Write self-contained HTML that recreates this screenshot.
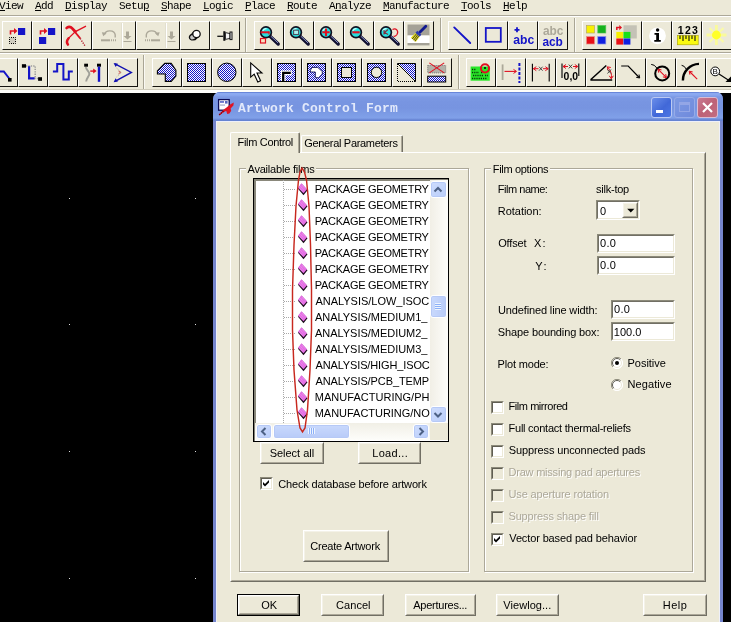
<!DOCTYPE html>
<html><head><meta charset="utf-8"><title>Artwork Control Form</title>
<style>
html,body{margin:0;padding:0;background:#000;}
body{width:731px;height:622px;overflow:hidden;position:relative;font-family:"Liberation Sans",sans-serif;font-size:11px;color:#000;}
div,span{position:absolute;box-sizing:border-box;}
.t{white-space:nowrap;line-height:13px;height:13px;}
.face{background:#ECE9D8;}
.menu span{font-family:"Liberation Mono",monospace;font-size:11px;letter-spacing:-0.6px;top:0px;line-height:13px;white-space:nowrap;}
.menu u{text-decoration:underline;text-underline-offset:1px;text-decoration-thickness:1px;}
.tb{width:30px;height:29px;border-left:1px solid #fff;border-top:1px solid #fff;border-right:1px solid #15140f;border-bottom:1px solid #15140f;background:#ECE9D8;}
.tb svg{position:absolute;left:0;top:0;}
.vsep{width:2px;border-left:1px solid #A9A594;border-right:1px solid #FAF9F3;}
.btn{background:#ECE9D8;border:1px solid;border-color:#fff #716F64 #716F64 #fff;text-align:center;}
.btn>i{position:absolute;left:0;top:0;right:0;bottom:0;border:1px solid;border-color:#F4F2E8 #ACA899 #ACA899 #F4F2E8;}
.etch{border:1px solid #ACA899;box-shadow:1px 1px 0 #fff, inset 1px 1px 0 #fff;}
.edit{background:#fff;border:1px solid;border-color:#8C8A7A #fff #fff #8C8A7A;}
.edit>i{position:absolute;left:0;top:0;right:0;bottom:0;border:1px solid;border-color:#716F64 #ECE9D8 #ECE9D8 #716F64;}
.cb{width:13px;height:13px;background:#fff;border:1px solid;border-color:#8C8A7A #fff #fff #8C8A7A;}
.cb>i{position:absolute;left:0;top:0;right:0;bottom:0;border:1px solid;border-color:#5f5d52 #ECE9D8 #ECE9D8 #5f5d52;}
.cb.dis{background:#ECE9D8;}
.row{left:60px;height:16px;line-height:16px;white-space:nowrap;letter-spacing:-0.32px;}
.dis{color:#ACA899;text-shadow:1px 1px 0 #fff;}
</style></head><body>
<svg width="0" height="0" style="position:absolute"><defs><pattern id="dz" width="2" height="2" patternUnits="userSpaceOnUse"><rect width="2" height="2" fill="#fff"/><rect width="1" height="1" fill="#1414C8"/><rect x="1" y="1" width="1" height="1" fill="#1414C8"/></pattern></defs></svg>

<div id="all" style="left:0;top:0;width:731px;height:622px;will-change:transform">
<div style="left:69px;top:198px;width:1px;height:1px;background:#ddd"></div>
<div style="left:69px;top:324px;width:1px;height:1px;background:#ddd"></div>
<div style="left:69px;top:451px;width:1px;height:1px;background:#ddd"></div>
<div style="left:69px;top:578px;width:1px;height:1px;background:#ddd"></div>
<div style="left:195px;top:198px;width:1px;height:1px;background:#ddd"></div>
<div style="left:195px;top:324px;width:1px;height:1px;background:#ddd"></div>
<div style="left:195px;top:451px;width:1px;height:1px;background:#ddd"></div>
<div style="left:195px;top:578px;width:1px;height:1px;background:#ddd"></div>
<div class="face" style="left:0;top:0;width:731px;height:93px"></div>
<div style="left:0;top:15px;width:731px;height:1px;background:#ACA899"></div>
<div style="left:0;top:16px;width:731px;height:1px;background:#fff"></div>
<div style="left:0;top:52px;width:731px;height:1px;background:#ACA899"></div>
<div style="left:0;top:53px;width:731px;height:1px;background:#fff"></div>
<div style="left:0;top:89px;width:731px;height:1px;background:#CFCBB9"></div>
<div style="left:0;top:90px;width:731px;height:3px;background:#FDFDFA"></div>
<div class="menu" style="left:0;top:0;width:731px;height:15px">
<span style="left:-1px"><u>V</u>iew</span>
<span style="left:35px"><u>A</u>dd</span>
<span style="left:65px"><u>D</u>isplay</span>
<span style="left:119px">Setu<u>p</u></span>
<span style="left:161px"><u>S</u>hape</span>
<span style="left:203px"><u>L</u>ogic</span>
<span style="left:245px"><u>P</u>lace</span>
<span style="left:287px"><u>R</u>oute</span>
<span style="left:329px">A<u>n</u>alyze</span>
<span style="left:383px"><u>M</u>anufacture</span>
<span style="left:461px"><u>T</u>ools</span>
<span style="left:503px"><u>H</u>elp</span>
</div>
<div class="tb" style="left:2px;top:21px"><svg width="28" height="27" viewBox="0 0 28 27"><path d="M7.5 12.5 V9 H12" fill="none" stroke="#E01020" stroke-width="1.6"/><path d="M11 6 L14.5 9 L11 12 Z" fill="#E01020"/><rect x="15" y="6" width="7.2" height="7" fill="#1414C8"/><rect x="6.5" y="15.5" width="6" height="6" fill="#CFCCBE" stroke="#000" stroke-width="1" stroke-dasharray="1 1" stroke-dashoffset="0.5"/></svg></div>
<div class="tb" style="left:32px;top:21px"><svg width="28" height="27" viewBox="0 0 28 27"><path d="M7.5 12.5 V9 H12" fill="none" stroke="#E01020" stroke-width="1.6"/><path d="M11 6 L14.5 9 L11 12 Z" fill="#E01020"/><rect x="15" y="6" width="7.2" height="7" fill="#1414C8"/><rect x="6" y="15" width="7.2" height="7" fill="#1414C8"/></svg></div>
<div class="tb" style="left:62px;top:21px"><svg width="28" height="27" viewBox="0 0 28 27"><path d="M3.6 6 C5 4.2 7.6 4.6 9 6.2 L12.4 9.8" fill="none" stroke="#E01020" stroke-width="2.7" stroke-linecap="round"/><path d="M9 6.2 L17.2 16.4" fill="none" stroke="#E01020" stroke-width="1.7"/><path d="M17.2 16.4 L21.8 23.6" stroke="#B01020" stroke-width="1.4" stroke-dasharray="1.2 1.3"/><path d="M23 4.2 L12.4 9.6 L5.2 16.6" fill="none" stroke="#E01020" stroke-width="1.3"/><path d="M5.6 16.2 C3.8 18.4 3.6 20.8 4.9 22.6" fill="none" stroke="#E01020" stroke-width="2.5" stroke-linecap="round"/></svg></div>
<div class="tb" style="left:92px;top:21px;width:44px"><div style="left:28px;top:1px;width:1px;height:25px;background:#E2DFD0"></div><div style="left:29px;top:1px;width:1px;height:25px;background:#fff"></div><svg width="42" height="27" viewBox="0 0 42 27"><path d="M11.5 12.5 A5.4 4.4 0 0 1 22.2 12.8 V15.5" fill="none" stroke="#ACA899" stroke-width="1.4"/><path d="M8.8 10.3 L13.8 10.8 L10.3 14.3 Z" fill="#ACA899"/><path d="M8 18.3 H17" stroke="#ACA899" stroke-width="2"/><path d="M18 18.3 H23" stroke="#ACA899" stroke-width="2" stroke-dasharray="1 1"/><path d="M33 9.5 H36 V14 H38.5 L34.5 17.5 L30.5 14 H33 Z" fill="#ACA899"/><path d="M30.5 19.5 H38.5" stroke="#ACA899" stroke-width="1"/></svg></div>
<div class="tb" style="left:136px;top:21px;width:44px"><div style="left:28px;top:1px;width:1px;height:25px;background:#E2DFD0"></div><div style="left:29px;top:1px;width:1px;height:25px;background:#fff"></div><svg width="42" height="27" viewBox="0 0 42 27"><path d="M20 12.5 A5.4 4.4 0 0 0 9.3 12.8 V15.5" fill="none" stroke="#ACA899" stroke-width="1.4"/><path d="M22.7 10.3 L17.7 10.8 L21.2 14.3 Z" fill="#ACA899"/><path d="M14 18.3 H23" stroke="#ACA899" stroke-width="2"/><path d="M8 18.3 H13" stroke="#ACA899" stroke-width="2" stroke-dasharray="1 1"/><path d="M33 9.5 H36 V14 H38.5 L34.5 17.5 L30.5 14 H33 Z" fill="#ACA899"/><path d="M30.5 19.5 H38.5" stroke="#ACA899" stroke-width="1"/></svg></div>
<div class="tb" style="left:180px;top:21px"><svg width="28" height="27" viewBox="0 0 28 27"><path d="M8 15 L12.5 9 L19 14 L14 18.5 Z" fill="#111"/><ellipse cx="12" cy="15" rx="3.6" ry="2.8" transform="rotate(-25 12 15)" fill="#C8C8C8" stroke="#111" stroke-width="1.3"/><circle cx="15.5" cy="12" r="3.7" fill="#fff" stroke="#111" stroke-width="1.3"/></svg></div>
<div class="tb" style="left:210px;top:21px"><svg width="28" height="27" viewBox="0 0 28 27"><path d="M6.3 14.3 H12.3" stroke="#111" stroke-width="1.3"/><rect x="12.3" y="9.2" width="2.1" height="9.6" fill="#111"/><path d="M14.4 10.6 L19 11.6 V16.4 L14.4 17.4 Z" fill="#F4F4F4" stroke="#111" stroke-width="0.9"/><rect x="19" y="10" width="2" height="7.6" fill="#E8E8E8" stroke="#111" stroke-width="1"/></svg></div>
<div class="vsep" style="left:245px;top:18px;height:34px"></div>
<div class="tb" style="left:254px;top:21px"><svg width="28" height="27" viewBox="0 0 28 27"><path d="M15 14.3 L23.2 22.0" stroke="#101030" stroke-width="3.4" stroke-linecap="round"/><path d="M15.5 13.9 L23 20.9" stroke="#8890C8" stroke-width="1"/><circle cx="11" cy="10.3" r="5.4" fill="#28E0E0" stroke="#101020" stroke-width="1.7"/><path d="M7.8 8.8 A3.6 3.6 0 0 1 11.5 6.700000000000001" stroke="#D8FFFF" stroke-width="1.3" fill="none"/><path d="M5.5 10.3 H14.5" stroke="#E01020" stroke-width="2"/><path d="M14 9.5 V12.5" stroke="#E01020" stroke-width="1.2"/><rect x="5.5" y="16.5" width="5" height="4.5" fill="#F8E0C0" stroke="#E01020" stroke-width="1.2"/></svg></div>
<div class="tb" style="left:284px;top:21px"><svg width="28" height="27" viewBox="0 0 28 27"><path d="M15 14.3 L23.2 22.0" stroke="#101030" stroke-width="3.4" stroke-linecap="round"/><path d="M15.5 13.9 L23 20.9" stroke="#8890C8" stroke-width="1"/><circle cx="11" cy="10.3" r="5.4" fill="#28E0E0" stroke="#101020" stroke-width="1.7"/><path d="M7.8 8.8 A3.6 3.6 0 0 1 11.5 6.700000000000001" stroke="#D8FFFF" stroke-width="1.3" fill="none"/><rect x="8.6" y="8.2" width="5" height="4.3" fill="#A8F0F0" stroke="#505060" stroke-width="1.1"/></svg></div>
<div class="tb" style="left:314px;top:21px"><svg width="28" height="27" viewBox="0 0 28 27"><path d="M15 14.3 L23.2 22.0" stroke="#101030" stroke-width="3.4" stroke-linecap="round"/><path d="M15.5 13.9 L23 20.9" stroke="#8890C8" stroke-width="1"/><circle cx="11" cy="10.3" r="5.4" fill="#28E0E0" stroke="#101020" stroke-width="1.7"/><path d="M7.8 8.8 A3.6 3.6 0 0 1 11.5 6.700000000000001" stroke="#D8FFFF" stroke-width="1.3" fill="none"/><path d="M7.3 10.3 H14.7 M11 6.6 V14" stroke="#E01020" stroke-width="2.1"/></svg></div>
<div class="tb" style="left:344px;top:21px"><svg width="28" height="27" viewBox="0 0 28 27"><path d="M15 14.3 L23.2 22.0" stroke="#101030" stroke-width="3.4" stroke-linecap="round"/><path d="M15.5 13.9 L23 20.9" stroke="#8890C8" stroke-width="1"/><circle cx="11" cy="10.3" r="5.4" fill="#28E0E0" stroke="#101020" stroke-width="1.7"/><path d="M7.8 8.8 A3.6 3.6 0 0 1 11.5 6.700000000000001" stroke="#D8FFFF" stroke-width="1.3" fill="none"/><path d="M7.3 10.3 H14.7" stroke="#E01020" stroke-width="2.1"/></svg></div>
<div class="tb" style="left:374px;top:21px"><svg width="28" height="27" viewBox="0 0 28 27"><path d="M15 14.3 L23.2 22.0" stroke="#101030" stroke-width="3.4" stroke-linecap="round"/><path d="M15.5 13.9 L23 20.9" stroke="#8890C8" stroke-width="1"/><circle cx="11" cy="10.3" r="5.4" fill="#28E0E0" stroke="#101020" stroke-width="1.7"/><path d="M7.8 8.8 A3.6 3.6 0 0 1 11.5 6.700000000000001" stroke="#D8FFFF" stroke-width="1.3" fill="none"/><path d="M9 8 V12.5 M13 7.5 L9.5 10.5 L13 12.5" stroke="#803040" stroke-width="1.1" fill="none"/><path d="M17.5 7.5 C21 5.5 24 9 22 12.5 C21 14 19.5 14.5 18.5 14" fill="none" stroke="#E01020" stroke-width="1.2"/></svg></div>
<div class="tb" style="left:404px;top:21px"><svg width="28" height="27" viewBox="0 0 28 27"><rect x="2.5" y="2.5" width="22" height="11" fill="#A5A297"/><rect x="2.5" y="13.5" width="22" height="7.5" fill="#fff"/><rect x="2.5" y="21" width="22" height="2.4" fill="#A5A297"/><path d="M20.8 4.3 L14.8 10.3" stroke="#101890" stroke-width="2.8" stroke-linecap="round"/><path d="M12.3 8.8 L16.3 12.8 L14.6 14.8 L10.3 11 Z" fill="#2838B0"/><path d="M10.3 11 L14.6 14.8 L10.8 20 L5.8 15.8 Z" fill="#E8E020"/><path d="M11.4 12 L7.2 17 M12.6 13 L8.6 18.2 M13.7 14 L9.9 19.2" stroke="#222" stroke-width="0.8"/></svg></div>
<div class="vsep" style="left:440px;top:18px;height:34px"></div>
<div class="tb" style="left:448px;top:21px"><svg width="28" height="27" viewBox="0 0 28 27"><path d="M5.2 5.4 L21.2 21" stroke="#1414C8" stroke-width="1.9" stroke-linecap="round"/></svg></div>
<div class="tb" style="left:478px;top:21px"><svg width="28" height="27" viewBox="0 0 28 27"><rect x="6.8" y="6" width="15" height="13.8" fill="none" stroke="#1414C8" stroke-width="1.8"/></svg></div>
<div class="tb" style="left:508px;top:21px"><svg width="28" height="27" viewBox="0 0 28 27"><path d="M5.5 7.8 H10.5 M8 5.3 V10.3" stroke="#1414C8" stroke-width="1.8"/><text x="4.2" y="21.5" font-family="Liberation Sans,sans-serif" font-weight="bold" font-size="12.5" fill="#1414C8" textLength="21" lengthAdjust="spacingAndGlyphs">abc</text></svg></div>
<div class="tb" style="left:538px;top:21px"><svg width="28" height="27" viewBox="0 0 28 27"><text x="3.9" y="13" font-family="Liberation Sans,sans-serif" font-weight="bold" font-size="12.5" fill="#ACA899" textLength="20.5" lengthAdjust="spacingAndGlyphs">abc</text><text x="3.4" y="24" font-family="Liberation Sans,sans-serif" font-weight="bold" font-size="12.5" fill="#1414C8" textLength="20.5" lengthAdjust="spacingAndGlyphs">acb</text></svg></div>
<div class="vsep" style="left:574px;top:18px;height:34px"></div>
<div class="tb" style="left:582px;top:21px"><svg width="28" height="27" viewBox="0 0 28 27"><rect x="3.5" y="3.5" width="8" height="7.5" fill="#F8F000" stroke="#B8A860" stroke-width="0.7"/><rect x="14.8" y="3.5" width="8" height="7.5" fill="#10A818" stroke="#58C858" stroke-width="0.7"/><path d="M15.5 5 H22 M15.5 7 H22 M15.5 9 H22" stroke="#30D838" stroke-width="0.9" stroke-dasharray="1 1"/><rect x="3.5" y="14.6" width="8" height="7.4" fill="#E81018" stroke="#E89088" stroke-width="0.7"/><rect x="14.8" y="14.6" width="8" height="7.4" fill="#1020E0" stroke="#8890E8" stroke-width="0.7"/></svg></div>
<div class="tb" style="left:612px;top:21px"><svg width="28" height="27" viewBox="0 0 28 27"><rect x="10.5" y="3.3" width="13.3" height="13.2" fill="#C4C2B6"/><path d="M3.8 8 V5.6 H7" fill="none" stroke="#E01020" stroke-width="1.5"/><path d="M6.3 3 L9 5.6 L6.3 8.2 Z" fill="#E01020"/><rect x="3.3" y="9.9" width="6.9" height="6.4" fill="#F8F000"/><rect x="10.5" y="9.9" width="6.9" height="6.4" fill="#18E018"/><rect x="3.3" y="16.5" width="6.9" height="6.1" fill="#E81018"/><rect x="10.5" y="16.5" width="6.9" height="6.1" fill="#1020E0"/></svg></div>
<div class="tb" style="left:642px;top:21px"><svg width="28" height="27" viewBox="0 0 28 27"><circle cx="14.5" cy="13.8" r="8.4" fill="#fff"/><circle cx="14.6" cy="8" r="1.7" fill="#000"/><path d="M11.5 11 H16 V18 H17.8 V19.8 H11.3 V18 H13.2 V12.8 H11.5 Z" fill="#000"/></svg></div>
<div class="tb" style="left:672px;top:21px"><svg width="28" height="27" viewBox="0 0 28 27"><text x="4.8" y="11.6" font-family="Liberation Sans,sans-serif" font-weight="bold" font-size="10.5" fill="#000" textLength="20" lengthAdjust="spacing">123</text><rect x="4.4" y="13.6" width="20.8" height="9.2" fill="#FAFA10" stroke="#a8a000" stroke-width="0.6"/><path d="M7 13.6 V17 M10 13.6 V19 M13 13.6 V17 M16 13.6 V19 M19 13.6 V17 M22 13.6 V19" stroke="#111" stroke-width="1.1"/></svg></div>
<div class="tb" style="left:702px;top:21px"><svg width="28" height="27" viewBox="0 0 28 27"><path d="M13.4 3 V23 M3.5 13 H23.5" stroke="#FAFA9C" stroke-width="2.8"/><path d="M6.5 6 L20.5 20 M20.5 6 L6.5 20" stroke="#FAFAA8" stroke-width="2.2"/><circle cx="13.4" cy="13" r="4.4" fill="#FFFF28"/></svg></div>
<div class="tb" style="left:-12px;top:58px"><svg width="28" height="27" viewBox="0 0 28 27"><path d="M10 12.4 H14.8 L20.6 20" fill="none" stroke="#1414C8" stroke-width="2"/><rect x="19" y="19" width="3.6" height="3.6" fill="#000"/></svg></div>
<div class="tb" style="left:18px;top:58px"><svg width="28" height="27" viewBox="0 0 28 27"><path d="M7 7 H16.2 V19.4 M15.4 19.4 H19" fill="none" stroke="#9C9C9C" stroke-width="1.5" stroke-dasharray="1.3 1.1"/><path d="M10.1 7.2 V19.4 H15.6" fill="none" stroke="#1414C8" stroke-width="2.2"/><rect x="2.9" y="5.2" width="4.1" height="3.5" fill="#000"/><rect x="19.1" y="18.2" width="3.9" height="3.6" fill="#000"/></svg></div>
<div class="tb" style="left:48px;top:58px"><svg width="28" height="27" viewBox="0 0 28 27"><path d="M3.9 12.4 H8.2 V4.9 H14.4 V20.6 H19.8 V12.4 H23.8" fill="none" stroke="#1414C8" stroke-width="2"/></svg></div>
<div class="tb" style="left:78px;top:58px"><svg width="28" height="27" viewBox="0 0 28 27"><path d="M7 8 C6.5 10.5 10.6 12.5 10.4 15 C10.1 17.5 7.4 19 7.2 22.5" fill="none" stroke="#A0A098" stroke-width="2"/><rect x="5.2" y="4.7" width="3.8" height="3" fill="#000"/><rect x="18" y="4.7" width="4" height="3" fill="#000"/><path d="M18.8 7.6 H21.2 V22.8 H18.8 Z" fill="#1414C8"/><path d="M11.3 12.1 H15" stroke="#E01020" stroke-width="1.4"/><path d="M14.2 9.6 L17.6 12.1 L14.2 14.6 Z" fill="#E01020"/></svg></div>
<div class="tb" style="left:108px;top:58px"><svg width="28" height="27" viewBox="0 0 28 27"><path d="M6 4.8 L22.4 13.4 L6 22.4" fill="none" stroke="#1010B0" stroke-width="1.4"/><path d="M4.6 4 L9 4.8 L6.6 8 Z M4.6 23.2 L9 22.4 L6.6 19.2 Z" fill="#1010B0"/><path d="M7.5 9 L12.5 13.4 L7.5 18" fill="none" stroke="#B8B8A8" stroke-width="1" stroke-dasharray="1.5 1"/><path d="M9.5 12 L11.5 13.4 L9.5 14.8" fill="none" stroke="#C04040" stroke-width="0.9"/></svg></div>
<div class="vsep" style="left:143px;top:55px;height:34px"></div>
<div class="tb" style="left:152px;top:58px"><svg width="28" height="27" viewBox="0 0 28 27"><path d="M4.4 11.8 L11.8 4.4 H18.2 L22.9 11.1 V17.1 L18.2 22.4 H12.3 V15 H4.4 Z" fill="url(#dz)" stroke="#000" stroke-width="1.1"/></svg></div>
<div class="tb" style="left:182px;top:58px"><svg width="28" height="27" viewBox="0 0 28 27"><rect x="4.5" y="4.5" width="18" height="18" fill="url(#dz)" stroke="#000" stroke-width="1"/></svg></div>
<div class="tb" style="left:212px;top:58px"><svg width="28" height="27" viewBox="0 0 28 27"><circle cx="13.8" cy="13.3" r="9.2" fill="url(#dz)" stroke="#000" stroke-width="1"/></svg></div>
<div class="tb" style="left:242px;top:58px"><svg width="28" height="27" viewBox="0 0 28 27"><path d="M7.7 3.9 V18.1 L11.2 15.2 L14.8 23 L17.6 21.7 L14 14 H19 Z" fill="#fff" stroke="#000" stroke-width="1.1" stroke-linejoin="miter"/></svg></div>
<div class="tb" style="left:272px;top:58px"><svg width="28" height="27" viewBox="0 0 28 27"><rect x="4.5" y="4.5" width="18" height="18" fill="url(#dz)" stroke="#000" stroke-width="1"/><path d="M10.2 22.5 V13.8 H18.8" fill="none" stroke="#fff" stroke-width="4.8"/><path d="M10.2 22.5 V13.8 H17.8" fill="none" stroke="#000" stroke-width="2.3"/><rect x="7.5" y="22" width="6" height="1" fill="#000"/></svg></div>
<div class="tb" style="left:302px;top:58px"><svg width="28" height="27" viewBox="0 0 28 27"><rect x="4.5" y="4.5" width="18" height="18" fill="url(#dz)" stroke="#000" stroke-width="1"/><path d="M7.4 11.3 L9 8.4 H14.8 L19.3 12.5 V15 L15.6 18.7 H12.3 V13 H7.4 Z" fill="#fff" stroke="#101050" stroke-width="0.9"/></svg></div>
<div class="tb" style="left:332px;top:58px"><svg width="28" height="27" viewBox="0 0 28 27"><rect x="4.5" y="4.5" width="18" height="18" fill="url(#dz)" stroke="#000" stroke-width="1"/><rect x="8.5" y="8.5" width="10" height="10" fill="#ECE9D8" stroke="#000" stroke-width="1"/></svg></div>
<div class="tb" style="left:362px;top:58px"><svg width="28" height="27" viewBox="0 0 28 27"><rect x="4.5" y="4.5" width="18" height="18" fill="url(#dz)" stroke="#000" stroke-width="1"/><circle cx="13.5" cy="13.4" r="5.2" fill="#ECE9D8" stroke="#000" stroke-width="1"/></svg></div>
<div class="tb" style="left:392px;top:58px"><svg width="28" height="27" viewBox="0 0 28 27"><path d="M4.5 4.5 H22.5 V22.5 Z" fill="url(#dz)" stroke="#000" stroke-width="1"/><path d="M4.5 5 V22.5 H22" fill="none" stroke="#000" stroke-width="1" stroke-dasharray="1 1"/></svg></div>
<div class="tb" style="left:422px;top:58px"><svg width="28" height="27" viewBox="0 0 28 27"><rect x="4.7" y="6.5" width="18" height="7.4" fill="#B4B2A8" stroke="#777" stroke-width="1" stroke-dasharray="1 1"/><path d="M6.3 3.9 L21.2 13.9 M21.2 3.9 L6.3 13.9" stroke="#E01020" stroke-width="1.1"/><rect x="4.7" y="17.2" width="18" height="5.8" fill="url(#dz)" stroke="#000" stroke-width="1"/></svg></div>
<div class="vsep" style="left:458px;top:55px;height:34px"></div>
<div class="tb" style="left:466px;top:58px"><svg width="28" height="27" viewBox="0 0 28 27"><rect x="3.6" y="7.5" width="19.2" height="14.2" fill="#28E828"/><path d="M5 10.5 H9 M5 13.5 H12 M6 16.5 H16 M5 19.5 H20 M14 13.5 H16 M18 16.5 H21" stroke="#0a300a" stroke-width="1.6" stroke-dasharray="1.2 1"/><circle cx="18" cy="9.3" r="4.1" fill="none" stroke="#E01020" stroke-width="2"/><rect x="17" y="8" width="2" height="2" fill="#103010"/></svg></div>
<div class="tb" style="left:496px;top:58px"><svg width="28" height="27" viewBox="0 0 28 27"><path d="M5.6 5.4 V21" stroke="#ACA899" stroke-width="1.8"/><path d="M7.5 12.4 H19" stroke="#E01020" stroke-width="1.1"/><path d="M19.5 12.4 l-3 2 M19.5 12.4 l-3 -2" stroke="#E01020" stroke-width="1" fill="none"/><path d="M22.4 4 V24" stroke="#1414C8" stroke-width="2" stroke-dasharray="3 1.5"/></svg></div>
<div class="tb" style="left:526px;top:58px"><svg width="28" height="27" viewBox="0 0 28 27"><path d="M5.4 4.8 V22.4 M22.2 4.8 V22.4" stroke="#000" stroke-width="1.1"/><path d="M6.5 9.7 H11.5 M16 9.7 H21" stroke="#E01020" stroke-width="1"/><path d="M6.3 9.7 l3 -2 M6.3 9.7 l3 2" stroke="#E01020" stroke-width="1" fill="none"/><path d="M21.3 9.7 l-3 2 M21.3 9.7 l-3 -2" stroke="#E01020" stroke-width="1" fill="none"/><path d="M12 7.7 L15.6 11.7 M15.6 7.7 L12 11.7" stroke="#333" stroke-width="0.9"/></svg></div>
<div class="tb" style="left:556px;top:58px"><svg width="28" height="27" viewBox="0 0 28 27"><path d="M5 4.4 V19 M21.8 4.4 V17" stroke="#000" stroke-width="1.1"/><path d="M6.2 7.5 H11 M16 7.5 H20.6" stroke="#E01020" stroke-width="1"/><path d="M6 7.5 l3 -2 M6 7.5 l3 2" stroke="#E01020" stroke-width="1" fill="none"/><path d="M20.8 7.5 l-3 2 M20.8 7.5 l-3 -2" stroke="#E01020" stroke-width="1" fill="none"/><path d="M11.8 5.6 L15.2 9.4 M15.2 5.6 L11.8 9.4" stroke="#333" stroke-width="0.9"/><text x="6.6" y="20.9" font-family="Liberation Sans,sans-serif" font-weight="bold" font-size="10" fill="#000" textLength="14.5" lengthAdjust="spacingAndGlyphs">0,0</text></svg></div>
<div class="tb" style="left:586px;top:58px"><svg width="28" height="27" viewBox="0 0 28 27"><path d="M3.4 20.9 H25.2 M3.6 20.7 L19.3 6.5" stroke="#000" stroke-width="1.5" fill="none"/><path d="M20.5 8 Q25.5 13 24.3 19.5" fill="none" stroke="#E01020" stroke-width="1"/><path d="M20.3 7.8 l3.4999999999999996 0.6999999999999997 M20.3 7.8 l0.6999999999999997 3.4999999999999996" stroke="#E01020" stroke-width="1" fill="none"/><path d="M24.3 19.8 l-2 -3 M24.3 19.8 l2 -3" stroke="#E01020" stroke-width="1" fill="none"/><path d="M20.5 10.5 L24 14.5 M24 10.5 L20.5 14.5" stroke="#333" stroke-width="0.9"/></svg></div>
<div class="tb" style="left:616px;top:58px"><svg width="28" height="27" viewBox="0 0 28 27"><path d="M4.2 7 H11.2 L22.2 18.5" fill="none" stroke="#000" stroke-width="1.2"/><path d="M22.7 19 l-3.4999999999999996 -0.6999999999999997 M22.7 19 l-0.6999999999999997 -3.4999999999999996" stroke="#000" stroke-width="1" fill="none"/></svg></div>
<div class="tb" style="left:646px;top:58px"><svg width="28" height="27" viewBox="0 0 28 27"><circle cx="15.2" cy="14.4" r="7" fill="none" stroke="#000" stroke-width="2"/><path d="M4.2 5.4 Q7.5 5.4 9.8 9" fill="none" stroke="#000" stroke-width="1"/><path d="M11.2 10.4 L19.2 18.4" stroke="#E01020" stroke-width="1.1"/><path d="M11 10.2 l3.4999999999999996 0.6999999999999997 M11 10.2 l0.6999999999999997 3.4999999999999996" stroke="#E01020" stroke-width="1" fill="none"/><path d="M19.4 18.6 l-3.4999999999999996 -0.6999999999999997 M19.4 18.6 l-0.6999999999999997 -3.4999999999999996" stroke="#E01020" stroke-width="1" fill="none"/></svg></div>
<div class="tb" style="left:676px;top:58px"><svg width="28" height="27" viewBox="0 0 28 27"><path d="M5.9 21.5 A16.5 16.5 0 0 1 22 4.9" fill="none" stroke="#000" stroke-width="2.4"/><path d="M4.6 6.3 Q7.5 6.5 9.3 10.3" fill="none" stroke="#000" stroke-width="1"/><path d="M20.2 20.2 L12.5 12.5" stroke="#E01020" stroke-width="1.1"/><path d="M12.2 12.2 l3.4999999999999996 0.6999999999999997 M12.2 12.2 l0.6999999999999997 3.4999999999999996" stroke="#E01020" stroke-width="1" fill="none"/></svg></div>
<div class="tb" style="left:706px;top:58px"><svg width="28" height="27" viewBox="0 0 28 27"><circle cx="8.2" cy="12.4" r="4.4" fill="#fff" stroke="#000" stroke-width="1"/><text x="5.6" y="15.4" font-family="Liberation Sans,sans-serif" font-size="8" fill="#000">B</text><path d="M12 15 L22 21.5" stroke="#000" stroke-width="1.1"/><path d="M24.4 17 V22.9 H18.5 Z" fill="#000"/></svg></div>
<div id="dlg" style="left:213px;top:92px;width:510px;height:540px;background:#7585CD;border-radius:7px 7px 0 0;overflow:hidden;will-change:transform">
<div style="left:0;top:0;width:510px;height:29px;background:linear-gradient(to bottom,#6482D7 0px,#6C8ADC 1px,#8CAAF1 1.5px,#8AA8F0 3px,#7C99E4 5px,#7895E1 10px,#7794E0 16px,#7E9EE7 24px,#80A0E8 26px,#6C8AD8 27.5px,#6280D0 29px)"></div>
<svg style="position:absolute;left:4px;top:6px" width="18" height="18" viewBox="0 0 18 18">
<rect x="1.6" y="1.6" width="10.6" height="10.6" fill="#fff" stroke="#0c0c58" stroke-width="1.3"/>
<rect x="3" y="3.2" width="4" height="1.5" fill="#4858c0"/><rect x="8" y="3" width="2.6" height="2.6" fill="#5868c0"/><rect x="3" y="6.6" width="5" height="0.9" fill="#8890b8"/>
<path d="M1.6 16.6 L6.5 11.8 L9.5 9.6 L13.5 6.3 L16.8 4.4 L16.4 7.6 L13.6 10.6 L14.2 12.8 L12.4 15.6 L10.2 16 L9.2 12.8 L5.2 15.2 L2.6 17.4 Z" fill="#E01424"/>
<path d="M2.4 16.8 L6.4 13.2" stroke="#400008" stroke-width="1.1" stroke-dasharray="1 1.2"/>
</svg>
<span style="left:25px;top:9px;font-family:'Liberation Mono',monospace;font-weight:bold;font-size:13px;letter-spacing:0.2px;line-height:15px;color:#E2E9FB;white-space:nowrap">Artwork Control Form</span>
<div style="left:438px;top:5px;width:21px;height:21px;border:1px solid #BBCAF3;border-radius:3px;background:linear-gradient(135deg,#6A8EEA 0%,#4168D8 55%,#4C76E4 100%)"><div style="left:4px;top:12px;width:7px;height:3px;background:#fff"></div></div>
<div style="left:461px;top:5px;width:21px;height:21px;border:1px solid #96ABE8;border-radius:3px;background:linear-gradient(135deg,#7D99E3 0%,#6F8ADC 100%)"><div style="left:4px;top:4px;width:11px;height:10px;border:1px solid #93A6E6;border-top-width:3px"></div></div>
<div style="left:484px;top:5px;width:21px;height:21px;border:1px solid #D9BCD3;border-radius:3px;background:linear-gradient(135deg,#C97A92 0%,#BE6277 50%,#C26C80 100%)"><svg style="position:absolute;left:0;top:0" width="19" height="19"><path d="M5 5 L14 14 M14 5 L5 14" stroke="#fff" stroke-width="2.2" stroke-linecap="butt"/></svg></div>
<div class="face" style="left:3px;top:29px;width:504px;height:520px;border:1px solid #EEF0FA;border-bottom:none"></div>
<div style="left:17px;top:60px;width:476px;height:430px;border:1px solid;border-color:#fff #716F64 #716F64 #fff;"><i style="position:absolute;left:0;top:0;right:0;bottom:0;border:1px solid;border-color:#ECE9D8 #ACA899 #ACA899 #ECE9D8"></i></div>
<div class="face" style="left:88px;top:43px;width:102px;height:17px;border:1px solid;border-color:#fff #716F64 transparent #fff;border-bottom:none;border-radius:2px 2px 0 0"><i style="position:absolute;left:0;top:0;right:0;bottom:0;border-right:1px solid #ACA899"></i></div>
<div class="face" style="left:17px;top:40px;width:70px;height:21px;border:1px solid;border-color:#fff #716F64 transparent #fff;border-bottom:none;border-radius:2px 2px 0 0"><i style="position:absolute;left:0;top:0;right:0;bottom:0;border-right:1px solid #ACA899"></i></div>
<span class="t" style="left:24.54px;top:44px;letter-spacing:-0.320px;">Film Control</span>
<span class="t" style="left:91.18px;top:45px;letter-spacing:-0.311px;">General Parameters</span>
<div class="etch" style="left:26px;top:76px;width:230px;height:404px"></div>
<div class="etch" style="left:271px;top:76px;width:209px;height:404px"></div>
<div class="face" style="left:33px;top:71px;width:70px;height:13px"></div>
<div class="face" style="left:278px;top:71px;width:59px;height:13px"></div>
<span class="t" style="left:34.44px;top:71px;letter-spacing:-0.200px;">Available films</span>
<span class="t" style="left:279.85px;top:71px;letter-spacing:-0.331px;">Film options</span>
<div style="left:40px;top:86px;width:196px;height:264px;background:#000"></div>
<div style="left:41px;top:87px;width:194px;height:262px;background:#fff;border-left:1px solid #858377;border-top:1px solid #858377"></div>
<div id="tree" style="left:42px;top:88px;width:193px;height:260px;background:#fff;overflow:hidden;box-shadow:inset 1px 1px 0 #8A887B">
<svg style="position:absolute;left:0;top:0" width="175" height="243" viewBox="0 0 175 243"><path d="M28.5 0 V243" stroke="#a8a8a8" stroke-width="1" stroke-dasharray="1 1" fill="none"/><path d="M29 9.5 H40" stroke="#a8a8a8" stroke-width="1" stroke-dasharray="1 1" fill="none"/><g transform="translate(43,3.7)"><path d="M0 5 L3.5 0 L9.5 6.5 L5.5 11.5 Z" fill="#1a0a1a"/><path d="M0 4 L3.5 -0.5 L9 5.5 L5.5 9.5 Z" fill="#E36BE3"/><path d="M2.5 2.5 L6 6.5 M1.5 4 L5 8 M4 1.5 L7.5 5.5" stroke="#F6C6F6" stroke-width="0.6" stroke-dasharray="0.8 0.8"/></g><path d="M29 25.5 H40" stroke="#a8a8a8" stroke-width="1" stroke-dasharray="1 1" fill="none"/><g transform="translate(43,19.7)"><path d="M0 5 L3.5 0 L9.5 6.5 L5.5 11.5 Z" fill="#1a0a1a"/><path d="M0 4 L3.5 -0.5 L9 5.5 L5.5 9.5 Z" fill="#E36BE3"/><path d="M2.5 2.5 L6 6.5 M1.5 4 L5 8 M4 1.5 L7.5 5.5" stroke="#F6C6F6" stroke-width="0.6" stroke-dasharray="0.8 0.8"/></g><path d="M29 41.5 H40" stroke="#a8a8a8" stroke-width="1" stroke-dasharray="1 1" fill="none"/><g transform="translate(43,35.7)"><path d="M0 5 L3.5 0 L9.5 6.5 L5.5 11.5 Z" fill="#1a0a1a"/><path d="M0 4 L3.5 -0.5 L9 5.5 L5.5 9.5 Z" fill="#E36BE3"/><path d="M2.5 2.5 L6 6.5 M1.5 4 L5 8 M4 1.5 L7.5 5.5" stroke="#F6C6F6" stroke-width="0.6" stroke-dasharray="0.8 0.8"/></g><path d="M29 57.5 H40" stroke="#a8a8a8" stroke-width="1" stroke-dasharray="1 1" fill="none"/><g transform="translate(43,51.7)"><path d="M0 5 L3.5 0 L9.5 6.5 L5.5 11.5 Z" fill="#1a0a1a"/><path d="M0 4 L3.5 -0.5 L9 5.5 L5.5 9.5 Z" fill="#E36BE3"/><path d="M2.5 2.5 L6 6.5 M1.5 4 L5 8 M4 1.5 L7.5 5.5" stroke="#F6C6F6" stroke-width="0.6" stroke-dasharray="0.8 0.8"/></g><path d="M29 73.5 H40" stroke="#a8a8a8" stroke-width="1" stroke-dasharray="1 1" fill="none"/><g transform="translate(43,67.7)"><path d="M0 5 L3.5 0 L9.5 6.5 L5.5 11.5 Z" fill="#1a0a1a"/><path d="M0 4 L3.5 -0.5 L9 5.5 L5.5 9.5 Z" fill="#E36BE3"/><path d="M2.5 2.5 L6 6.5 M1.5 4 L5 8 M4 1.5 L7.5 5.5" stroke="#F6C6F6" stroke-width="0.6" stroke-dasharray="0.8 0.8"/></g><path d="M29 89.5 H40" stroke="#a8a8a8" stroke-width="1" stroke-dasharray="1 1" fill="none"/><g transform="translate(43,83.7)"><path d="M0 5 L3.5 0 L9.5 6.5 L5.5 11.5 Z" fill="#1a0a1a"/><path d="M0 4 L3.5 -0.5 L9 5.5 L5.5 9.5 Z" fill="#E36BE3"/><path d="M2.5 2.5 L6 6.5 M1.5 4 L5 8 M4 1.5 L7.5 5.5" stroke="#F6C6F6" stroke-width="0.6" stroke-dasharray="0.8 0.8"/></g><path d="M29 105.5 H40" stroke="#a8a8a8" stroke-width="1" stroke-dasharray="1 1" fill="none"/><g transform="translate(43,99.7)"><path d="M0 5 L3.5 0 L9.5 6.5 L5.5 11.5 Z" fill="#1a0a1a"/><path d="M0 4 L3.5 -0.5 L9 5.5 L5.5 9.5 Z" fill="#E36BE3"/><path d="M2.5 2.5 L6 6.5 M1.5 4 L5 8 M4 1.5 L7.5 5.5" stroke="#F6C6F6" stroke-width="0.6" stroke-dasharray="0.8 0.8"/></g><path d="M29 121.5 H40" stroke="#a8a8a8" stroke-width="1" stroke-dasharray="1 1" fill="none"/><g transform="translate(43,115.7)"><path d="M0 5 L3.5 0 L9.5 6.5 L5.5 11.5 Z" fill="#1a0a1a"/><path d="M0 4 L3.5 -0.5 L9 5.5 L5.5 9.5 Z" fill="#E36BE3"/><path d="M2.5 2.5 L6 6.5 M1.5 4 L5 8 M4 1.5 L7.5 5.5" stroke="#F6C6F6" stroke-width="0.6" stroke-dasharray="0.8 0.8"/></g><path d="M29 137.5 H40" stroke="#a8a8a8" stroke-width="1" stroke-dasharray="1 1" fill="none"/><g transform="translate(43,131.7)"><path d="M0 5 L3.5 0 L9.5 6.5 L5.5 11.5 Z" fill="#1a0a1a"/><path d="M0 4 L3.5 -0.5 L9 5.5 L5.5 9.5 Z" fill="#E36BE3"/><path d="M2.5 2.5 L6 6.5 M1.5 4 L5 8 M4 1.5 L7.5 5.5" stroke="#F6C6F6" stroke-width="0.6" stroke-dasharray="0.8 0.8"/></g><path d="M29 153.5 H40" stroke="#a8a8a8" stroke-width="1" stroke-dasharray="1 1" fill="none"/><g transform="translate(43,147.7)"><path d="M0 5 L3.5 0 L9.5 6.5 L5.5 11.5 Z" fill="#1a0a1a"/><path d="M0 4 L3.5 -0.5 L9 5.5 L5.5 9.5 Z" fill="#E36BE3"/><path d="M2.5 2.5 L6 6.5 M1.5 4 L5 8 M4 1.5 L7.5 5.5" stroke="#F6C6F6" stroke-width="0.6" stroke-dasharray="0.8 0.8"/></g><path d="M29 169.5 H40" stroke="#a8a8a8" stroke-width="1" stroke-dasharray="1 1" fill="none"/><g transform="translate(43,163.7)"><path d="M0 5 L3.5 0 L9.5 6.5 L5.5 11.5 Z" fill="#1a0a1a"/><path d="M0 4 L3.5 -0.5 L9 5.5 L5.5 9.5 Z" fill="#E36BE3"/><path d="M2.5 2.5 L6 6.5 M1.5 4 L5 8 M4 1.5 L7.5 5.5" stroke="#F6C6F6" stroke-width="0.6" stroke-dasharray="0.8 0.8"/></g><path d="M29 185.5 H40" stroke="#a8a8a8" stroke-width="1" stroke-dasharray="1 1" fill="none"/><g transform="translate(43,179.7)"><path d="M0 5 L3.5 0 L9.5 6.5 L5.5 11.5 Z" fill="#1a0a1a"/><path d="M0 4 L3.5 -0.5 L9 5.5 L5.5 9.5 Z" fill="#E36BE3"/><path d="M2.5 2.5 L6 6.5 M1.5 4 L5 8 M4 1.5 L7.5 5.5" stroke="#F6C6F6" stroke-width="0.6" stroke-dasharray="0.8 0.8"/></g><path d="M29 201.5 H40" stroke="#a8a8a8" stroke-width="1" stroke-dasharray="1 1" fill="none"/><g transform="translate(43,195.7)"><path d="M0 5 L3.5 0 L9.5 6.5 L5.5 11.5 Z" fill="#1a0a1a"/><path d="M0 4 L3.5 -0.5 L9 5.5 L5.5 9.5 Z" fill="#E36BE3"/><path d="M2.5 2.5 L6 6.5 M1.5 4 L5 8 M4 1.5 L7.5 5.5" stroke="#F6C6F6" stroke-width="0.6" stroke-dasharray="0.8 0.8"/></g><path d="M29 217.5 H40" stroke="#a8a8a8" stroke-width="1" stroke-dasharray="1 1" fill="none"/><g transform="translate(43,211.7)"><path d="M0 5 L3.5 0 L9.5 6.5 L5.5 11.5 Z" fill="#1a0a1a"/><path d="M0 4 L3.5 -0.5 L9 5.5 L5.5 9.5 Z" fill="#E36BE3"/><path d="M2.5 2.5 L6 6.5 M1.5 4 L5 8 M4 1.5 L7.5 5.5" stroke="#F6C6F6" stroke-width="0.6" stroke-dasharray="0.8 0.8"/></g><path d="M29 233.5 H40" stroke="#a8a8a8" stroke-width="1" stroke-dasharray="1 1" fill="none"/><g transform="translate(43,227.7)"><path d="M0 5 L3.5 0 L9.5 6.5 L5.5 11.5 Z" fill="#1a0a1a"/><path d="M0 4 L3.5 -0.5 L9 5.5 L5.5 9.5 Z" fill="#E36BE3"/><path d="M2.5 2.5 L6 6.5 M1.5 4 L5 8 M4 1.5 L7.5 5.5" stroke="#F6C6F6" stroke-width="0.6" stroke-dasharray="0.8 0.8"/></g></svg>
<span class="row" style="left:59.72px;top:0.5px;letter-spacing:-0.263px">PACKAGE GEOMETRY</span>
<span class="row" style="left:59.72px;top:16.5px;letter-spacing:-0.263px">PACKAGE GEOMETRY</span>
<span class="row" style="left:59.72px;top:32.5px;letter-spacing:-0.263px">PACKAGE GEOMETRY</span>
<span class="row" style="left:59.72px;top:48.5px;letter-spacing:-0.263px">PACKAGE GEOMETRY</span>
<span class="row" style="left:59.72px;top:64.5px;letter-spacing:-0.263px">PACKAGE GEOMETRY</span>
<span class="row" style="left:59.72px;top:80.5px;letter-spacing:-0.263px">PACKAGE GEOMETRY</span>
<span class="row" style="left:59.72px;top:96.5px;letter-spacing:-0.263px">PACKAGE GEOMETRY</span>
<span class="row" style="left:60.45px;top:112.5px;letter-spacing:-0.015px">ANALYSIS/LOW_ISOC</span>
<span class="row" style="left:60.00px;top:128.5px;letter-spacing:-0.030px">ANALYSIS/MEDIUM1_</span>
<span class="row" style="left:60.00px;top:144.5px;letter-spacing:-0.030px">ANALYSIS/MEDIUM2_</span>
<span class="row" style="left:60.00px;top:160.5px;letter-spacing:-0.030px">ANALYSIS/MEDIUM3_</span>
<span class="row" style="left:60.45px;top:176.5px;letter-spacing:-0.132px">ANALYSIS/HIGH_ISOC</span>
<span class="row" style="left:60.45px;top:192.5px;letter-spacing:-0.100px">ANALYSIS/PCB_TEMP</span>
<span class="row" style="left:59.71px;top:208.5px;letter-spacing:0.036px">MANUFACTURING/PH</span>
<span class="row" style="left:59.71px;top:224.5px;letter-spacing:-0.027px">MANUFACTURING/NO</span>
<div style="left:175px;top:0;width:18px;height:243px;background:linear-gradient(to right,#F1EFE6,#FDFDFA)"></div>
<div style="left:175px;top:1px;width:17px;height:17px;border:1px solid #fff;border-radius:3px;background:linear-gradient(135deg,#CFDDFD,#B9CDFA);box-shadow:inset 0 0 0 1px #B6C9F6"><svg style="position:absolute;left:0;top:0" width="15" height="15"><path d="M3.5 9.5 L7 6 L10.5 9.5" stroke="#4D6185" stroke-width="2" fill="none"/></svg></div>
<div style="left:175px;top:226px;width:17px;height:17px;border:1px solid #fff;border-radius:3px;background:linear-gradient(135deg,#CFDDFD,#B9CDFA);box-shadow:inset 0 0 0 1px #B6C9F6"><svg style="position:absolute;left:0;top:0" width="15" height="15"><path d="M3.5 6 L7 9.5 L10.5 6" stroke="#4D6185" stroke-width="2" fill="none"/></svg></div>
<div style="left:175px;top:115px;width:17px;height:23px;border:1px solid #fff;border-radius:3px;background:linear-gradient(to right,#C9D9FD,#B8CBF8);box-shadow:inset 0 0 0 1px #B6C9F6"><div style="left:4px;top:7px;width:6px;height:7px;background:repeating-linear-gradient(to bottom,#EEF4FE 0,#EEF4FE 1px,#8CB0F8 1px,#8CB0F8 2px)"></div></div>
<div style="left:0;top:243px;width:175px;height:17px;background:linear-gradient(to bottom,#F1EFE6,#FDFDFA)"></div>
<div class="face" style="left:175px;top:243px;width:18px;height:17px"></div>
<div style="left:1px;top:244px;width:16px;height:15px;border:1px solid #fff;border-radius:3px;background:linear-gradient(135deg,#CFDDFD,#B9CDFA);box-shadow:inset 0 0 0 1px #B6C9F6"><svg style="position:absolute;left:0;top:0" width="14" height="13"><path d="M8.5 3 L5 6.5 L8.5 10" stroke="#4D6185" stroke-width="2" fill="none"/></svg></div>
<div style="left:158px;top:244px;width:16px;height:15px;border:1px solid #fff;border-radius:3px;background:linear-gradient(135deg,#CFDDFD,#B9CDFA);box-shadow:inset 0 0 0 1px #B6C9F6"><svg style="position:absolute;left:0;top:0" width="14" height="13"><path d="M5.5 3 L9 6.5 L5.5 10" stroke="#4D6185" stroke-width="2" fill="none"/></svg></div>
<div style="left:18px;top:244px;width:77px;height:15px;border:1px solid #fff;border-radius:3px;background:linear-gradient(to bottom,#C9D9FD,#B8CBF8);box-shadow:inset 0 0 0 1px #B6C9F6"><div style="left:34px;top:3px;width:7px;height:6px;background:repeating-linear-gradient(to right,#EEF4FE 0,#EEF4FE 1px,#8CB0F8 1px,#8CB0F8 2px)"></div></div>
</div>
<svg style="position:absolute;left:72px;top:68px" width="40" height="280" viewBox="285 160 40 280"><path d="M302 168 L300 172 L298.5 180 L296 206 L294 245 L292.5 290 L292.5 330 L294 370 L297 410 L300 428 L302.5 432 L305 428 L307.5 410 L310 370 L311.5 330 L311.5 290 L310.5 245 L309 206 L306.5 180 L304.5 172 Z" fill="none" stroke="#C8281E" stroke-width="1.45"/></svg>
<div class="btn" style="left:47px;top:350px;width:64px;height:22px"><i></i></div>
<span class="t" style="left:56.70px;top:354.5px;letter-spacing:-0.026px;">Select all</span>
<div class="btn" style="left:145px;top:350px;width:63px;height:22px"><i></i></div>
<span class="t" style="left:159.23px;top:354.5px;letter-spacing:0.310px;">Load...</span>
<div class="btn" style="left:90px;top:438px;width:86px;height:32px"><i></i></div>
<span class="t" style="left:97.27px;top:447.5px;letter-spacing:-0.217px;">Create Artwork</span>
<div style="left:24px;top:502px;width:63px;height:22px;background:#000"></div>
<div class="btn" style="left:25px;top:503px;width:61px;height:20px"><i></i></div>
<span class="t" style="left:48.23px;top:506.5px;letter-spacing:-0.129px;">OK</span>
<div class="btn" style="left:108px;top:502px;width:63px;height:22px"><i></i></div>
<span class="t" style="left:123.09px;top:506.5px;letter-spacing:0.042px;">Cancel</span>
<div class="btn" style="left:192px;top:502px;width:71px;height:22px"><i></i></div>
<span class="t" style="left:200.22px;top:506.5px;letter-spacing:-0.243px;">Apertures...</span>
<div class="btn" style="left:283px;top:502px;width:63px;height:22px"><i></i></div>
<span class="t" style="left:290.37px;top:506.5px;letter-spacing:0.043px;">Viewlog...</span>
<div class="btn" style="left:430px;top:502px;width:64px;height:22px"><i></i></div>
<span class="t" style="left:449.85px;top:506.5px;letter-spacing:0.462px;">Help</span>
<div class="cb" style="left:47px;top:385px"><i></i><svg style="position:absolute;left:1px;top:1px" width="9" height="9" viewBox="0 0 9 9"><path d="M1 3 L3 5 L7 1 V3.6 L3 7.6 L1 5.6 Z" fill="#000"/></svg></div>
<span class="t" style="left:65.20px;top:385.5px;letter-spacing:-0.149px;">Check database before artwork</span>
<span class="t" style="left:284.81px;top:90.80000000000001px;letter-spacing:-0.474px;">Film name:</span>
<span class="t" style="left:383.07px;top:90.5px;letter-spacing:-0.241px;">silk-top</span>
<span class="t" style="left:284.81px;top:112.5px;letter-spacing:-0.037px;">Rotation:</span>
<span class="t" style="left:285.22px;top:145.3px;letter-spacing:-0.169px;">Offset</span>
<span class="t" style="left:321.06px;top:145.3px;letter-spacing:1.127px;">X:</span>
<span class="t" style="left:322.20px;top:167.60000000000002px;letter-spacing:1.539px;">Y:</span>
<span class="t" style="left:284.95px;top:211.60000000000002px;letter-spacing:-0.131px;">Undefined line width:</span>
<span class="t" style="left:284.77px;top:233.60000000000002px;letter-spacing:-0.123px;">Shape bounding box:</span>
<span class="t" style="left:284.54px;top:266.4px;letter-spacing:-0.170px;">Plot mode:</span>
<div class="edit" style="left:383px;top:108px;width:44px;height:20px"><i></i><div class="btn" style="left:25px;top:1px;width:16px;height:16px"><i></i><svg style="position:absolute;left:0;top:0" width="14" height="14"><path d="M4.2 5.8 H11.4 L7.8 9.4 Z" fill="#000"/></svg></div></div>
<span class="t" style="left:387.10px;top:113px;letter-spacing:-0.300px;">0</span>
<div class="edit" style="left:384px;top:142px;width:78px;height:19px"><i></i></div>
<span class="t" style="left:387.10px;top:145.3px;letter-spacing:0.250px;">0.0</span>
<div class="edit" style="left:384px;top:164px;width:78px;height:19px"><i></i></div>
<span class="t" style="left:387.10px;top:167.39999999999998px;letter-spacing:0.250px;">0.0</span>
<div class="edit" style="left:398px;top:208px;width:64px;height:19px"><i></i></div>
<span class="t" style="left:401.10px;top:211.3px;letter-spacing:0.250px;">0.0</span>
<div class="edit" style="left:398px;top:230px;width:64px;height:19px"><i></i></div>
<span class="t" style="left:400.80px;top:233.5px;letter-spacing:0.000px;">100.0</span>
<svg style="position:absolute;left:398px;top:264.5px" width="12" height="12" viewBox="0 0 12 12"><circle cx="6" cy="6" r="5.5" fill="#fff"/><path d="M10 2 A5.5 5.5 0 0 0 2 10" fill="none" stroke="#8C8A7A" stroke-width="1"/><path d="M2 10 A5.5 5.5 0 0 0 10 2" fill="none" stroke="#fff" stroke-width="1"/><path d="M9.2 2.8 A4.5 4.5 0 0 0 2.8 9.2" fill="none" stroke="#5f5d52" stroke-width="1"/><path d="M2.8 9.2 A4.5 4.5 0 0 0 9.2 2.8" fill="none" stroke="#ECE9D8" stroke-width="1"/><circle cx=6 cy=6 r=2 fill=#000 /></svg>
<span class="t" style="left:414.53px;top:264.5px;letter-spacing:-0.021px;">Positive</span>
<svg style="position:absolute;left:398px;top:286.7px" width="12" height="12" viewBox="0 0 12 12"><circle cx="6" cy="6" r="5.5" fill="#fff"/><path d="M10 2 A5.5 5.5 0 0 0 2 10" fill="none" stroke="#8C8A7A" stroke-width="1"/><path d="M2 10 A5.5 5.5 0 0 0 10 2" fill="none" stroke="#fff" stroke-width="1"/><path d="M9.2 2.8 A4.5 4.5 0 0 0 2.8 9.2" fill="none" stroke="#5f5d52" stroke-width="1"/><path d="M2.8 9.2 A4.5 4.5 0 0 0 9.2 2.8" fill="none" stroke="#ECE9D8" stroke-width="1"/></svg>
<span class="t" style="left:414.53px;top:286.2px;letter-spacing:0.083px;">Negative</span>
<div class="cb" style="left:278px;top:309px"><i></i></div>
<span class="t" style="left:295.54px;top:308.4px;letter-spacing:-0.446px;">Film mirrored</span>
<div class="cb" style="left:278px;top:331px"><i></i></div>
<span class="t" style="left:295.54px;top:330.4px;letter-spacing:-0.241px;">Full contact thermal-reliefs</span>
<div class="cb" style="left:278px;top:353px"><i></i></div>
<span class="t" style="left:295.77px;top:352.4px;letter-spacing:-0.117px;">Suppress unconnected pads</span>
<div class="cb dis" style="left:278px;top:375px"><i></i></div>
<span class="t dis" style="left:295.44px;top:374.4px;letter-spacing:-0.207px;">Draw missing pad apertures</span>
<div class="cb dis" style="left:278px;top:397px"><i></i></div>
<span class="t dis" style="left:295.44px;top:396.4px;letter-spacing:-0.128px;">Use aperture rotation</span>
<div class="cb dis" style="left:278px;top:419px"><i></i></div>
<span class="t dis" style="left:295.46px;top:418.4px;letter-spacing:-0.143px;">Suppress shape fill</span>
<div class="cb" style="left:278px;top:441px"><i></i><svg style="position:absolute;left:1px;top:1px" width="9" height="9" viewBox="0 0 9 9"><path d="M1 3 L3 5 L7 1 V3.6 L3 7.6 L1 5.6 Z" fill="#000"/></svg></div>
<span class="t" style="left:296.29px;top:440.4px;letter-spacing:-0.128px;">Vector based pad behavior</span>
</div>
</div>
</body></html>
